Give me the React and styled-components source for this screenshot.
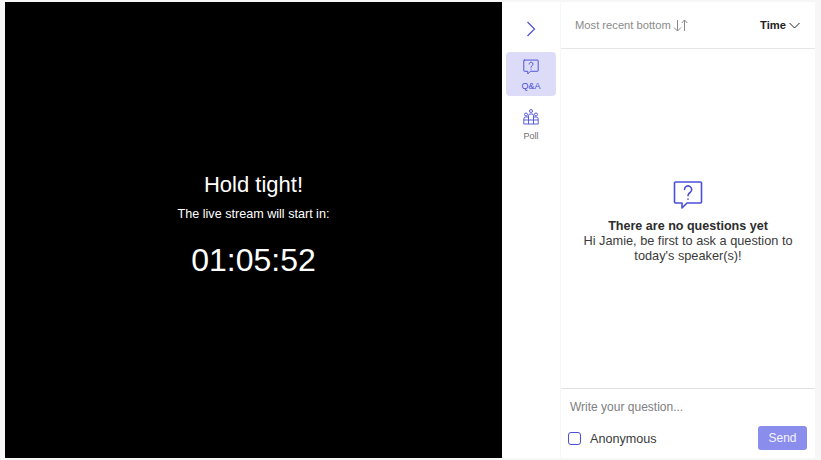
import React from 'react';
import styled, { createGlobalStyle } from 'styled-components';

const Global = createGlobalStyle`
  html, body { margin: 0; padding: 0; background: #f7f7f8; }
  body { font-family: "Liberation Sans", Arial, sans-serif; }
  * { box-sizing: border-box; }
`;
const Page = styled.div`
  width: 821px; height: 460px; padding: 2px 6px 2px 5px; display: flex; background: #f7f7f8; overflow: hidden;
`;
const Stage = styled.section`
  width: 497px; background: #000; color: #fff; display: flex; flex-direction: column; align-items: center; padding-top: 170px;
`;
const Hold = styled.h1`margin: 0; font-weight: 400; font-size: 22px; line-height: 26px;`;
const Sub = styled.p`margin: 9px 0 0; font-size: 12.6px; line-height: 15px;`;
const Timer = styled.div`margin-top: 19px; font-size: 32px; line-height: 38px;`;
const Rail = styled.nav`
  width: 58px; background: #fff; display: flex; flex-direction: column; align-items: center; padding: 0 4px;
`;
const Toggle = styled.div`height: 50px; display: flex; align-items: center; justify-content: center; padding-top: 4px;`;
const RailItem = styled.div`
  width: 50px; height: 44px; border-radius: 4px; margin-bottom: 6px; display: flex; flex-direction: column; align-items: center; padding-top: 7px;
  background: ${p => (p.$active ? '#dcdcf8' : 'transparent')};
  color: ${p => (p.$active ? '#4a4fd8' : '#707070')};
  font-size: 9px; line-height: 11px; gap: 6px;
`;
const Panel = styled.section`
  width: 254px; margin-left: 1px; background: #fff; display: flex; flex-direction: column;
`;
const Head = styled.header`
  height: 47px; border-bottom: 1px solid #e6e6e8; display: flex; align-items: center; justify-content: space-between; padding: 0 15px 0 14px;
`;
const Sort = styled.div`display: flex; align-items: center; gap: 2px; color: #8a8a8a; font-size: 11.2px;`;
const TimeBtn = styled.div`display: flex; align-items: center; gap: 3px; color: #222; font-size: 11.2px; font-weight: 700;`;
const Empty = styled.div`
  flex: 1; display: flex; flex-direction: column; align-items: center; padding-top: 131px; text-align: center; color: #3a3a3a; font-size: 12.75px; line-height: 15px;
`;
const EmptyTitle = styled.strong`display: block; margin-top: 9px; line-height: 14px; color: #2c2c2c; font-size: 12.55px;`;
const Composer = styled.footer`
  height: 70px; border-top: 1px solid #e0e0e3; padding: 0 8px 8px 7px; display: flex; flex-direction: column; justify-content: space-between;
`;
const Placeholder = styled.div`color: #808080; font-size: 12px; line-height: 14px; margin: 11px 0 0 2px;`;
const Row = styled.div`display: flex; align-items: center; justify-content: space-between;`;
const Anon = styled.label`display: flex; align-items: center; gap: 9px; color: #3a3a3a; font-size: 12.6px;`;
const AnonText = styled.span`padding-top: 2px;`;
const Box = styled.span`width: 13px; height: 13px; border: 1.5px solid #4a4fd8; border-radius: 3px; display: block;`;
const Send = styled.button`
  width: 49px; height: 24px; border: 0; border-radius: 3px; background: #8a8dec; color: #f4f4ff; font: 12px "Liberation Sans", Arial, sans-serif; padding: 0;
`;

const Chevron = () => (
  <svg width="10" height="16" viewBox="0 0 10 16" fill="none" stroke="#4a4fd8" strokeWidth="1.2"><path d="M1.5 1l7 7-7 7" /></svg>
);
const Bubble = ({ size, sw }) => (
  <svg width={size} height={size} viewBox="0 0 30 30" fill="none" stroke="#4a4fd8" strokeWidth={sw} strokeLinejoin="round" strokeLinecap="round">
    <path d="M2.5 2h25a1 1 0 0 1 1 1v19a1 1 0 0 1-1 1H14l-5 5v-5H2.5a1 1 0 0 1-1-1V3a1 1 0 0 1 1-1z" />
    <path d="M11.5 9.5a3.6 3.6 0 1 1 5.6 3c-1.4 1-2.1 1.7-2.1 3.2" />
    <path d="M15 19v.3" />
  </svg>
);
const PollIcon = () => (
  <svg width="16" height="16" viewBox="0 0 16 16" fill="none" stroke="#4a4fd8" strokeWidth="0.9">
    <circle cx="8" cy="2" r="1.5" /><circle cx="3" cy="5.5" r="1.5" /><circle cx="13" cy="5.5" r="1.5" />
    <path d="M5.5 15V6.5q0-1.5 1.5-1.5h2q1.5 0 1.5 1.5V15" />
    <path d="M.8 15V10q0-2 2-2h2.7M15.2 15V10q0-2-2-2h-2.7M.8 11h14.4M.8 15h14.4" />
  </svg>
);
const SortIcon = () => (
  <svg width="16" height="13" viewBox="0 0 16 13" fill="none" stroke="#8a8a8a" strokeWidth="1"><path d="M4.5 1v11M1 8.5l3.5 3.5L8 8.5M11.5 12V1M8.7 4L11.5 1l2.8 3" /></svg>
);
const Down = () => (
  <svg width="11" height="7" viewBox="0 0 11 7" fill="none" stroke="#222" strokeWidth="1"><path d="M.5 1l5 5 5-5" /></svg>
);

export default function App() {
  return (
    <Page>
      <Global />
      <Stage>
        <Hold>Hold tight!</Hold>
        <Sub>The live stream will start in:</Sub>
        <Timer>01:05:52</Timer>
      </Stage>
      <Rail>
        <Toggle><Chevron /></Toggle>
        <RailItem $active><Bubble size={16} sw={1.8} />Q&amp;A</RailItem>
        <RailItem><PollIcon />Poll</RailItem>
      </Rail>
      <Panel>
        <Head>
          <Sort>Most recent bottom <SortIcon /></Sort>
          <TimeBtn>Time <Down /></TimeBtn>
        </Head>
        <Empty>
          <Bubble size={30} sw={1.6} />
          <EmptyTitle>There are no questions yet</EmptyTitle>
          Hi Jamie, be first to ask a question to<br />today's speaker(s)!
        </Empty>
        <Composer>
          <Placeholder>Write your question...</Placeholder>
          <Row>
            <Anon><Box /><AnonText>Anonymous</AnonText></Anon>
            <Send>Send</Send>
          </Row>
        </Composer>
      </Panel>
    </Page>
  );
}
